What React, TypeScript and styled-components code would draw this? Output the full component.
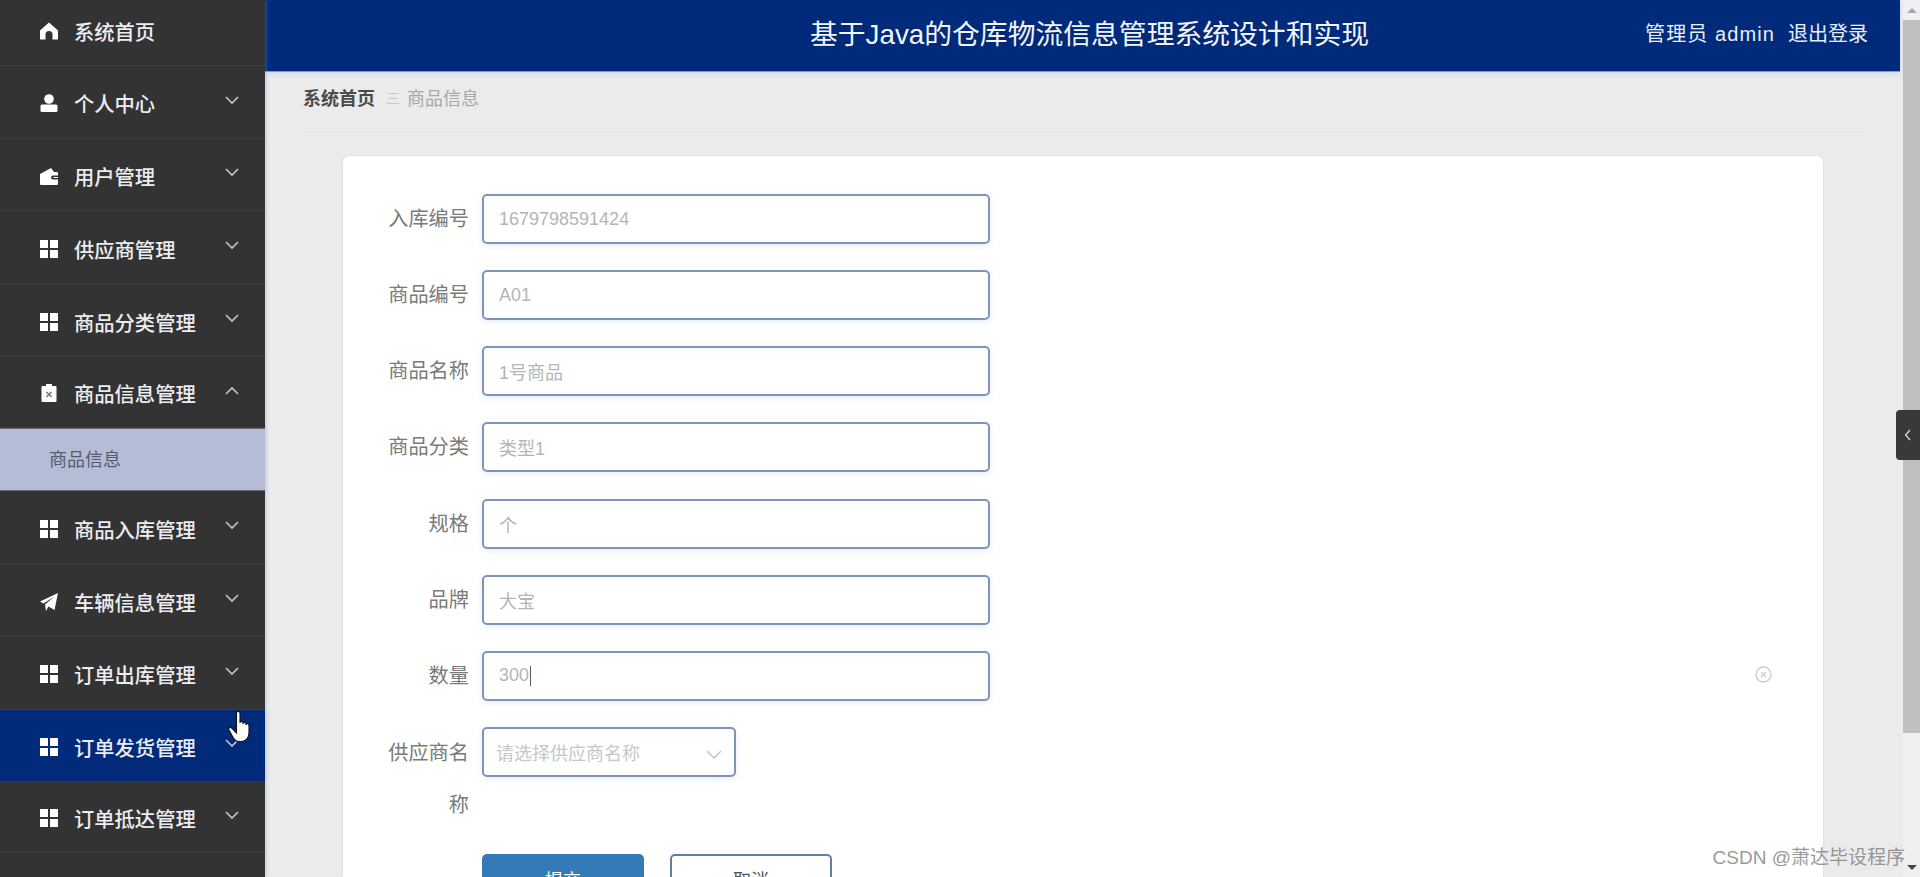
import React from 'react';
import styled, { createGlobalStyle } from 'styled-components';

const Global = createGlobalStyle`
  html, body { margin: 0; padding: 0; width: 100%; height: 100%; overflow: hidden; background: #ebebeb; }
  * { box-sizing: border-box; }
  body { font-family: "Liberation Sans", "Noto Sans CJK SC", sans-serif; }
`;

const Page = styled.div`
  position: relative;
  display: flex;
  width: 1920px;
  height: 877px;
  overflow: hidden;
  background: #ebebeb;
`;

const Sidebar = styled.nav`
  flex: 0 0 265px;
  height: 877px;
  background: #333333;
  overflow: hidden;
  box-shadow: 1px 0 4px rgba(120, 150, 215, 0.45);
  z-index: 1;
`;

const MenuRow = styled.div<{ $h: number; $hover?: boolean }>`
  display: flex;
  align-items: center;
  height: ${p => p.$h}px;
  padding: 2px 26px 0 40px;
  background: ${p => (p.$hover ? '#012a7b' : 'transparent')};
  border-bottom: 1px solid ${p => (p.$hover ? '#1c3a78' : '#3c3c3c')};
  color: #ecedf0;
  font-size: 20.3px;
  font-weight: 500;
  &:first-child {
    padding: 0 26px 4px 40px;
  }
`;

const MenuIcon = styled.svg`
  flex: 0 0 18px;
  width: 18px;
  height: 18px;
  margin-right: 16px;
  fill: #fff;
`;

const MenuChevron = styled.svg`
  width: 14px;
  height: 9px;
  margin-left: auto;
  margin-bottom: 6px;
  fill: none;
  stroke: #c4c4c4;
  stroke-width: 1.6;
`;

const SubRow = styled.div`
  display: flex;
  align-items: center;
  height: 63px;
  padding: 0 0 3px 49px;
  background: #b4bdd5;
  border-top: 1px solid #66687a;
  border-bottom: 1px solid #66687a;
  color: #565c70;
  font-size: 18px;
`;

const Main = styled.main`
  flex: 0 0 1635px;
  display: flex;
  flex-direction: column;
  height: 877px;
`;

const Header = styled.header`
  position: relative;
  flex: 0 0 72px;
  display: flex;
  align-items: center;
  justify-content: flex-end;
  padding: 0 32px 6px 0;
  background: #012a7b;
  border-bottom: 1px solid #7d9ccc;
  box-shadow: 0 2px 6px rgba(120, 150, 215, 0.18);
  color: #e8eef6;
  font-size: 20px;
`;

const Title = styled.h1`
  position: absolute;
  left: 0;
  right: 0;
  top: 16px;
  margin: 0 0 0 14px;
  text-align: center;
  font-size: 27.8px;
  font-weight: 400;
  line-height: 38px;
  color: #f2f5fa;
`;

const UserName = styled.span`
  margin-right: 13px;
  letter-spacing: 1.1px;
`;

const Crumbs = styled.div`
  flex: 0 0 57px;
  display: flex;
  align-items: center;
  margin: 0 38px;
  padding-bottom: 6px;
  border-bottom: 1px solid #e5e5e5;
  font-size: 18px;
`;

const CrumbHome = styled.span`
  font-weight: 700;
  color: #4a4a4a;
`;

const CrumbSep = styled.span`
  margin: 0 7px 0 11px;
  color: #c8c8c8;
  font-size: 14px;
`;

const CrumbCurrent = styled.span`
  color: #a8a8a8;
`;

const Card = styled.section`
  flex: 1;
  width: 1480px;
  margin: 27px 0 0 78px;
  padding: 38px 0 0 40px;
  overflow: hidden;
  background: #fff;
  border-radius: 6px 6px 0 0;
  box-shadow: 0 0 2px rgba(0, 0, 0, 0.14);
`;

const FormRow = styled.div`
  display: flex;
  align-items: flex-start;
  margin-bottom: 26.15px;
`;

const Label = styled.label`
  flex: 0 0 86px;
  margin-right: 13px;
  text-align: right;
  font-size: 20.2px;
  line-height: 50px;
  color: #7a7a7a;
  word-break: break-all;
`;

const LongLabel = styled(Label)`
  line-height: 52px;
`;

const Field = styled.div<{ $w: number; $pad?: number }>`
  display: flex;
  align-items: center;
  width: ${p => p.$w}px;
  height: 50px;
  padding-left: ${p => p.$pad ?? 15}px;
  border: 2px solid #7f94b8;
  border-radius: 5px;
  background: #fff;
  box-shadow: 0 2px 6px rgba(110, 140, 210, 0.16);
  font-size: 18px;
  color: #b5b5b5;
`;

const SelectText = styled.span`
  flex: 1;
  color: #c6c6cc;
`;

const SelectArrow = styled.svg`
  width: 16px;
  height: 10px;
  margin: 6px 12px 0 0;
  fill: none;
  stroke: #c0c4cc;
  stroke-width: 1.5;
`;

const Caret = styled.span`
  display: inline-block;
  width: 1px;
  height: 20px;
  margin-left: 1px;
  background: #555;
`;

const Clear = styled.svg`
  width: 17px;
  height: 17px;
  margin: 15px 51px 0 auto;
  fill: none;
  stroke: #c8ccd4;
`;

const Actions = styled.div`
  display: flex;
  gap: 26px;
  margin: -3px 0 0 99px;
`;

const Button = styled.button<{ $primary?: boolean }>`
  width: 162px;
  height: 50px;
  padding: 0;
  border: ${p => (p.$primary ? 'none' : '2px solid #5f7fa3')};
  border-radius: 5px;
  background: ${p => (p.$primary ? '#337ab7' : '#fff')};
  color: ${p => (p.$primary ? '#fff' : '#555')};
  font: inherit;
  font-size: 18px;
`;

const ScrollBar = styled.aside`
  flex: 0 0 17px;
  display: flex;
  flex-direction: column;
  height: 877px;
  margin-left: 3px;
  background: #f1eff1;
`;

const ScrollCap = styled.div`
  flex: 0 0 20px;
  display: flex;
  align-items: center;
  justify-content: center;
`;

const ScrollThumb = styled.div`
  flex: 0 0 713px;
  background: #bfbfbf;
`;

const ScrollSpace = styled.div`
  flex: 1;
`;

const Triangle = styled.span<{ $down?: boolean }>`
  width: 0;
  height: 0;
  border-left: 5px solid transparent;
  border-right: 5px solid transparent;
  ${p => (p.$down ? 'border-top: 5px solid #444;' : 'border-bottom: 5px solid #a8a8a8;')}
`;

const CollapseHandle = styled.div`
  position: absolute;
  top: 410px;
  right: 0;
  display: flex;
  align-items: center;
  justify-content: center;
  width: 24px;
  height: 50px;
  background: #393939;
  border-radius: 4px 0 0 4px;
`;

const HandleIcon = styled.svg`
  width: 8px;
  height: 12px;
  fill: none;
  stroke: #ddd;
  stroke-width: 1.2;
`;

const Cursor = styled.svg`
  position: absolute;
  left: 227px;
  top: 711px;
  width: 25px;
  height: 33px;
  z-index: 3;
`;

const Watermark = styled.div`
  position: absolute;
  right: 15px;
  bottom: 8px;
  font-size: 19px;
  line-height: 22px;
  color: rgba(125, 125, 125, 0.8);
  z-index: 2;
`;

const icons: Record<string, React.ReactNode> = {
  home: <path d="M9 .5 18 8.500V17.500H12.500V12.500a3.500 3.500 0 0 0-7 0V17.500H0V8.500z" />,
  user: (
    <>
      <circle cx="9" cy="5" r="4.800" />
      <rect x="0.500" y="10.500" width="17" height="7.500" rx="1.500" />
    </>
  ),
  wallet: <path d="M1 6.500 11 1l3 4h3a1 1 0 0 1 1 1v2.500h-5a2 2 0 0 0 0 4h5V17a1 1 0 0 1-1 1H1a1 1 0 0 1-1-1V7.500a1 1 0 0 1 1-1zM13.500 10h4.500v1h-4.500z" fillRule="evenodd" />,
  grid: (
    <>
      <rect x="0" y="0" width="8" height="8" />
      <rect x="10" y="0" width="8" height="8" />
      <rect x="0" y="10" width="8" height="8" />
      <rect x="10" y="10" width="8" height="8" />
    </>
  ),
  clip: (
    <>
      <path d="M6 0h6v2h3.500a1 1 0 0 1 1 1v14a1 1 0 0 1-1 1h-13a1 1 0 0 1-1-1V3a1 1 0 0 1 1-1H6z" />
      <path d="M6.500 8l5 5M11.500 8l-5 5" stroke="#6e7f74" strokeWidth="1.600" fill="none" />
    </>
  ),
  plane: <path d="M18 0 14.500 17 8.500 13.500 6 18 5 11.500 14.500 3.500 3.500 10.500 0 8.500z" />,
};

const rows: { icon: string; text: string; h: number; open?: 'up' | 'down'; hover?: boolean; sub?: boolean }[] = [
  { icon: 'home', text: '系统首页', h: 66 },
  { icon: 'user', text: '个人中心', h: 73, open: 'down' },
  { icon: 'wallet', text: '用户管理', h: 72, open: 'down' },
  { icon: 'grid', text: '供应商管理', h: 74, open: 'down' },
  { icon: 'grid', text: '商品分类管理', h: 72, open: 'down' },
  { icon: 'clip', text: '商品信息管理', h: 71, open: 'up', sub: true },
  { icon: 'grid', text: '商品入库管理', h: 74, open: 'down' },
  { icon: 'plane', text: '车辆信息管理', h: 72, open: 'down' },
  { icon: 'grid', text: '订单出库管理', h: 73, open: 'down' },
  { icon: 'grid', text: '订单发货管理', h: 72, open: 'down', hover: true },
  { icon: 'grid', text: '订单抵达管理', h: 71, open: 'down' },
];

const fields: { label: string; value: string; caret?: boolean }[] = [
  { label: '入库编号', value: '1679798591424' },
  { label: '商品编号', value: 'A01' },
  { label: '商品名称', value: '1号商品' },
  { label: '商品分类', value: '类型1' },
  { label: '规格', value: '个' },
  { label: '品牌', value: '大宝' },
  { label: '数量', value: '300', caret: true },
];

export default function App() {
  return (
    <Page>
      <Global />
      <Sidebar>
        {rows.map(r => (
          <React.Fragment key={r.text}>
            <MenuRow $h={r.h} $hover={r.hover}>
              <MenuIcon viewBox="0 0 18 18">{icons[r.icon]}</MenuIcon>
              {r.text}
              {r.open && (
                <MenuChevron viewBox="0 0 14 9">
                  <polyline points={r.open === 'up' ? '1,8 7,2 13,8' : '1,1 7,7 13,1'} />
                </MenuChevron>
              )}
            </MenuRow>
            {r.sub && <SubRow>商品信息</SubRow>}
          </React.Fragment>
        ))}
      </Sidebar>
      <Main>
        <Header>
          <Title>基于Java的仓库物流信息管理系统设计和实现</Title>
          <UserName>管理员 admin</UserName>
          <span>退出登录</span>
        </Header>
        <Crumbs>
          <CrumbHome>系统首页</CrumbHome>
          <CrumbSep>三</CrumbSep>
          <CrumbCurrent>商品信息</CrumbCurrent>
        </Crumbs>
        <Card>
          {fields.map(f => (
            <FormRow key={f.label}>
              <Label>{f.label}</Label>
              <Field $w={508}>
                {f.value}
                {f.caret && <Caret />}
              </Field>
              {f.caret && (
                <Clear viewBox="0 0 17 17">
                  <circle cx="8.500" cy="8.500" r="7.500" strokeWidth="1.300" />
                  <path d="M6 6l5 5M11 6l-5 5" strokeWidth="1.300" />
                </Clear>
              )}
            </FormRow>
          ))}
          <FormRow>
            <LongLabel>供应商名称</LongLabel>
            <Field $w={254} $pad={12}>
              <SelectText>请选择供应商名称</SelectText>
              <SelectArrow viewBox="0 0 16 10">
                <polyline points="1,1 8,8 15,1" />
              </SelectArrow>
            </Field>
          </FormRow>
          <Actions>
            <Button $primary>提交</Button>
            <Button>取消</Button>
          </Actions>
        </Card>
      </Main>
      <ScrollBar>
        <ScrollCap>
          <Triangle />
        </ScrollCap>
        <ScrollThumb />
        <ScrollSpace />
        <ScrollCap>
          <Triangle $down />
        </ScrollCap>
      </ScrollBar>
      <CollapseHandle>
        <HandleIcon viewBox="0 0 8 12">
          <polyline points="6,1 1.500,6 6,11" />
        </HandleIcon>
      </CollapseHandle>
      <Cursor viewBox="0 0 25 33">
        <path
          d="M9.500 2c0-2 3.500-2 3.500 0v10c0-2 3-2 3 0v1c0-2 3-2 3 0v1c0-2 3-1.500 3 .5v7c0 5-3 9-7.500 9h-3c-3 0-5-3-6.500-6l-3-5.500c-1-2 1.500-3.500 3-1.500l4.500 4.500z"
          fill="#fff"
          stroke="#111"
          strokeWidth="1.100"
        />
      </Cursor>
      <Watermark>CSDN @萧达毕设程序</Watermark>
    </Page>
  );
}
